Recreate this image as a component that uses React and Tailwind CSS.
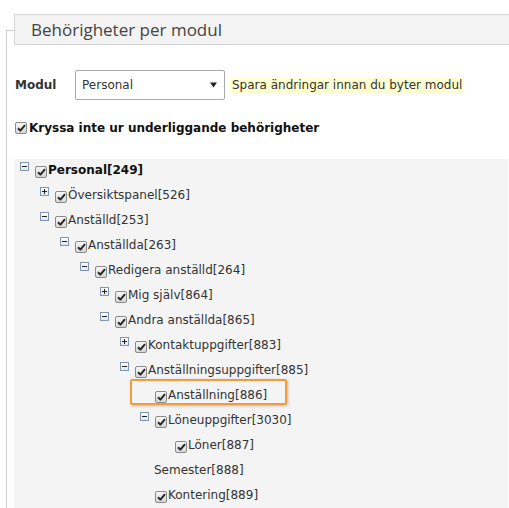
import React from "react";

const tree = [
  { level: 0, exp: "minus", text: "Personal[249]", bold: true },
  { level: 1, exp: "plus", text: "Översiktspanel[526]" },
  { level: 1, exp: "minus", text: "Anställd[253]" },
  { level: 2, exp: "minus", text: "Anställda[263]" },
  { level: 3, exp: "minus", text: "Redigera anställd[264]" },
  { level: 4, exp: "plus", text: "Mig själv[864]" },
  { level: 4, exp: "minus", text: "Andra anställda[865]" },
  { level: 5, exp: "plus", text: "Kontaktuppgifter[883]" },
  { level: 5, exp: "minus", text: "Anställningsuppgifter[885]" },
  { level: 6, exp: null, text: "Anställning[886]", highlight: true },
  { level: 6, exp: "minus", text: "Löneuppgifter[3030]" },
  { level: 7, exp: null, text: "Löner[887]" },
  { level: 6, exp: null, text: "Semester[888]", noCheck: true },
  { level: 6, exp: null, text: "Kontering[889]" },
];

// old-style grey checkbox, always checked
const Check = () => (
  <span className="flex h-[12px] w-[12px] shrink-0 items-center justify-center rounded-[2px] border border-[#8a8a8a] bg-gradient-to-b from-[#f7f7f7] to-[#d6d6d6]">
    <svg width="9" height="8" viewBox="0 0 9 8">
      <path d="M1 4.2 L3.4 6.6 L8 1.2" fill="none" stroke="#262626" strokeWidth="2" strokeLinejoin="round" />
    </svg>
  </span>
);

const Expander = ({ type }) => (
  <svg width="9" height="9" viewBox="0 0 9 9" className="mt-[3px]">
    <defs>
      <linearGradient id="expg" x1="0" y1="0" x2="0" y2="1">
        <stop offset="0" stopColor="#ffffff" />
        <stop offset="1" stopColor="#dfe6ee" />
      </linearGradient>
    </defs>
    <rect x="0.5" y="0.5" width="8" height="8" fill="url(#expg)" stroke="#7d97b3" />
    <path d="M2 4.5 H7" stroke="#222" strokeWidth="1" />
    {type === "plus" && <path d="M4.5 2 V7" stroke="#222" strokeWidth="1" />}
  </svg>
);

const TreeRow = ({ node }) => (
  <div
    className="relative flex h-[25px] items-start"
    style={{ paddingLeft: 6 + node.level * 20 }}
  >
    <span className="flex w-[15px] shrink-0">{node.exp && <Expander type={node.exp} />}</span>
    {!node.noCheck && (
      <span className="mr-px mt-[7px]">
        <Check />
      </span>
    )}
    <span className={`leading-[22px] whitespace-nowrap ${node.bold ? "font-bold text-[#111]" : ""} ${node.noCheck ? "-ml-px" : ""}`}>
      {node.text}
    </span>
    {node.highlight && (
      <span className="pointer-events-none absolute left-[116px] top-[-5px] h-[26px] w-[157px] rounded-[2px] border-2 border-[#f39a3d] shadow-[1px_1px_3px_rgba(0,0,0,0.25)]" />
    )}
  </div>
);

export default function App() {
  return (
    <div className="h-[508px] overflow-hidden bg-white pt-[30px] font-['DejaVu_Sans',sans-serif] text-[12px] text-[#333]">
      <div className="ml-[6px] h-full border-l border-t border-[#cccccc]">
        {/* header / legend */}
        <div className="-mt-[17px] ml-[7px] flex h-[31px] items-center border-y border-l border-[#d4d4d4] bg-[#f3f3f3] pl-[16px] font-['Open_Sans',sans-serif] text-[17px] text-[#444]">
          Behörigheter per modul
        </div>

        {/* module picker */}
        <div className="mt-[25px] flex items-center pl-[8px]">
          <span className="w-[60px] font-bold">Modul</span>
          <div className="flex h-[30px] w-[150px] items-center justify-between rounded-[2px] border border-[#a9a9a9] bg-white pl-[6px] pr-[7px]">
            <span>Personal</span>
            <svg width="7" height="6" viewBox="0 0 7 6">
              <path d="M0 0.5 H7 L3.5 5.5 Z" fill="#222" />
            </svg>
          </div>
          <span className="ml-[5px] bg-[#ffffd2] px-[2px] leading-[15px]">
            Spara ändringar innan du byter modul
          </span>
        </div>

        <div className="mt-[21px] flex h-[13px] items-center pl-[8px]">
          <Check />
          <span className="ml-[2px] font-bold text-[#111]">Kryssa inte ur underliggande behörigheter</span>
        </div>

        {/* permission tree */}
        <div className="ml-[7px] mr-px mt-[25px] h-[400px] bg-[#f4f4f4]">
          {tree.map((node, i) => (
            <TreeRow key={i} node={node} />
          ))}
        </div>
      </div>
    </div>
  );
}
